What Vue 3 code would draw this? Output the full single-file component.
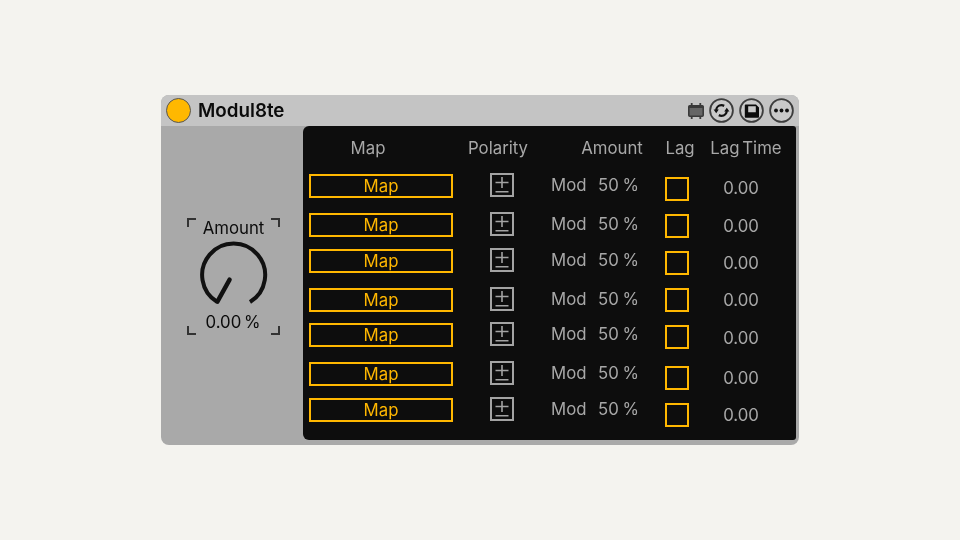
<script setup>
const polarityGaps = [0, 15, 12, 15, 11, 15, 12]
const lagGaps = [0, 13, 13, 13, 13, 17, 13]
const timeGaps = [0, 14, 13, 13, 14, 16, 13]
</script>

<template>
  <main class="page">
    <section class="device">
      <header class="titlebar">
        <span class="power"></span>
        <h1 class="title">Modul8te</h1>
        <div class="tools">
          <svg class="cal" width="16" height="16" viewBox="0 0 16 16">
            <path d="M3.7 0v3M12.3 0v3M3.7 13v3M12.3 13v3" stroke="#3c3c3c" stroke-width="1.8" fill="none" />
            <rect x="0.8" y="2.8" width="14.4" height="10.4" rx="1" fill="#666" stroke="#3a3a3a" stroke-width="1.6" />
            <rect x="0.8" y="2.8" width="14.4" height="2.2" fill="#3a3a3a" />
          </svg>
          <svg width="25" height="25" viewBox="0 0 25 25">
            <circle cx="12.5" cy="12.5" r="11.4" fill="#c9c9c9" stroke="#3d3d3d" stroke-width="1.8" />
            <path d="M7.2 12.5c0-3 2.3-5.3 5.3-5.3 1 0 1.9.3 2.7.7" fill="none" stroke="#111" stroke-width="2.3" />
            <path d="M17.8 12.5c0 3-2.3 5.3-5.3 5.3-1 0-1.9-.3-2.7-.7" fill="none" stroke="#111" stroke-width="2.3" />
            <path d="M4.6 11.6h5.2l-2.6 3.6zM20.4 13.4h-5.2l2.6-3.6z" fill="#111" />
          </svg>
          <svg width="25" height="25" viewBox="0 0 25 25">
            <circle cx="12.5" cy="12.5" r="11.4" fill="#c9c9c9" stroke="#3d3d3d" stroke-width="1.8" />
            <path fill-rule="evenodd" d="M5.8 7.3c0-.5.3-.8.8-.8h10.4l3 3v9.5c0 .5-.3.8-.8.8H6.6c-.5 0-.8-.3-.8-.8zM9.2 8.3v5.9h7.6V8.3z" fill="#0c0c0c" />
          </svg>
          <svg width="25" height="25" viewBox="0 0 25 25">
            <circle cx="12.5" cy="12.5" r="11.4" fill="#c9c9c9" stroke="#3d3d3d" stroke-width="1.8" />
            <circle cx="7" cy="12.5" r="1.9" fill="#111" />
            <circle cx="12.5" cy="12.5" r="1.9" fill="#111" />
            <circle cx="18" cy="12.5" r="1.9" fill="#111" />
          </svg>
        </div>
      </header>

      <div class="body">
        <aside class="side">
          <div class="dial">
            <i class="corner tl"></i><i class="corner tr"></i><i class="corner bl"></i><i class="corner br"></i>
            <span class="dial-label">Amount</span>
            <svg class="knob" width="70" height="70" viewBox="0 0 70 70">
              <path d="M18.3 62 A31.5 31.5 0 1 1 51 62" fill="none" stroke="#111" stroke-width="4" />
              <path d="M18.4 61.6 L30.6 39.6" fill="none" stroke="#111" stroke-width="4.4" stroke-linecap="round" />
            </svg>
            <span class="dial-value">0.00 %</span>
          </div>
        </aside>

        <div class="panel">
          <div class="heads">
            <span>Map</span><span>Polarity</span><span>Amount</span><span>Lag</span><span>Lag Time</span>
          </div>
          <div class="cols">
            <div class="col col-map">
              <button v-for="(g, i) in polarityGaps" :key="i" class="map" :style="{ marginTop: g + 'px' }">Map</button>
            </div>
            <div class="col col-pol">
              <span v-for="(g, i) in polarityGaps" :key="i" class="pol" :style="{ marginTop: g + 'px' }">
                <svg width="24" height="24" viewBox="0 0 24 24">
                  <rect x="1" y="1" width="22" height="22" fill="none" stroke="#a3a3a3" stroke-width="2" />
                  <path d="M5.5 9.5h13M12 4v11M5.5 18.7h13" fill="none" stroke="#a3a3a3" stroke-width="1.6" />
                </svg>
              </span>
            </div>
            <div class="col col-amt">
              <div v-for="(g, i) in polarityGaps" :key="i" class="amt" :style="{ marginTop: g + 'px' }">
                <span>Mod</span><span>50 %</span>
              </div>
            </div>
            <div class="col col-lag">
              <span v-for="(g, i) in lagGaps" :key="i" class="lag" :style="{ marginTop: g + 'px' }"></span>
            </div>
            <div class="col col-time">
              <span v-for="(g, i) in timeGaps" :key="i" class="time" :style="{ marginTop: g + 'px' }">0.00</span>
            </div>
          </div>
        </div>
      </div>
    </section>
  </main>
</template>

<style scoped>
.page {
  width: 960px;
  height: 540px;
  background: #f4f3ef;
  display: flex;
  align-items: center;
  justify-content: center;
  font-family: Inter, "Liberation Sans", sans-serif;
}
.device {
  width: 638px;
  height: 350px;
  border-radius: 8px;
  overflow: hidden;
  background: #a9a9a9;
  display: flex;
  flex-direction: column;
  will-change: transform;
}
.titlebar {
  height: 31px;
  flex: none;
  background: #c4c4c4;
  display: flex;
  align-items: center;
  padding: 0 5px;
}
.power {
  width: 25px;
  height: 25px;
  box-sizing: border-box;
  border-radius: 50%;
  background: #ffb800;
  border: 1.5px solid #555;
  flex: none;
}
.title {
  margin: 0 0 0 7px;
  font-size: 18.8px;
  font-weight: 600;
  color: #0b0b0b;
}
.tools {
  margin-left: auto;
  display: flex;
  align-items: center;
  gap: 5px;
}
.cal { margin-right: 0; }
.body {
  flex: 1;
  display: flex;
  min-height: 0;
}
.side {
  width: 142px;
  flex: none;
  display: flex;
  justify-content: center;
  padding: 92px 0 0 2px;
  box-sizing: border-box;
}
.dial {
  position: relative;
  width: 93px;
  height: 117px;
  display: flex;
  flex-direction: column;
  align-items: center;
  color: #0b0b0b;
  font-size: 16.8px;
  word-spacing: -2px;
}
.dial-label { line-height: 20px; margin-left: 1px; }
.knob { margin-top: 2px; margin-left: 2px; flex: none; }
.dial-value { line-height: 20px; margin-top: 2px; }
.corner {
  position: absolute;
  width: 7px;
  height: 7px;
  border: 0 solid #333;
}
.tl { left: 0; top: 0; border-width: 2px 0 0 2px; }
.tr { right: 0; top: 0; border-width: 2px 2px 0 0; }
.bl { left: 0; bottom: 0; border-width: 0 0 2px 2px; }
.br { right: 0; bottom: 0; border-width: 0 2px 2px 0; }
.panel {
  width: 493px;
  height: 314px;
  flex: none;
  background: #0d0d0d;
  border-radius: 6px 3px 3px 6px;
  color: #a8a8a8;
  font-size: 16.8px;
}
.heads {
  height: 44px;
  display: grid;
  grid-template-columns: 130px 130px 98px 38px 94px;
  align-items: center;
  text-align: center;
  word-spacing: -2px;
}
.cols {
  display: flex;
}
.col {
  display: flex;
  flex-direction: column;
  flex: none;
}
.col-map { width: 144px; margin-left: 6px; padding-top: 4px; }
.col-pol { width: 24px; margin-left: 37px; padding-top: 3px; }
.col-amt { width: 88px; margin-left: 37px; padding-top: 3px; word-spacing: -1px; }
.col-lag { width: 24px; margin-left: 26px; padding-top: 7px; }
.col-time { width: 104px; padding-top: 6px; align-items: center; }
.map {
  height: 24px;
  padding: 0;
  box-sizing: border-box;
  background: transparent;
  border: 2px solid #ffb700;
  color: #ffb700;
  font: inherit;
  line-height: 20px;
}
.pol { height: 24px; display: block; }
.pol svg { display: block; }
.amt {
  height: 24px;
  display: flex;
  justify-content: space-between;
  line-height: 24px;
}
.lag {
  height: 24px;
  box-sizing: border-box;
  border: 2px solid #ffb700;
  display: block;
}
.time { height: 24px; line-height: 24px; }
</style>

<style>
html, body { background: #f4f3ef; }
</style>
